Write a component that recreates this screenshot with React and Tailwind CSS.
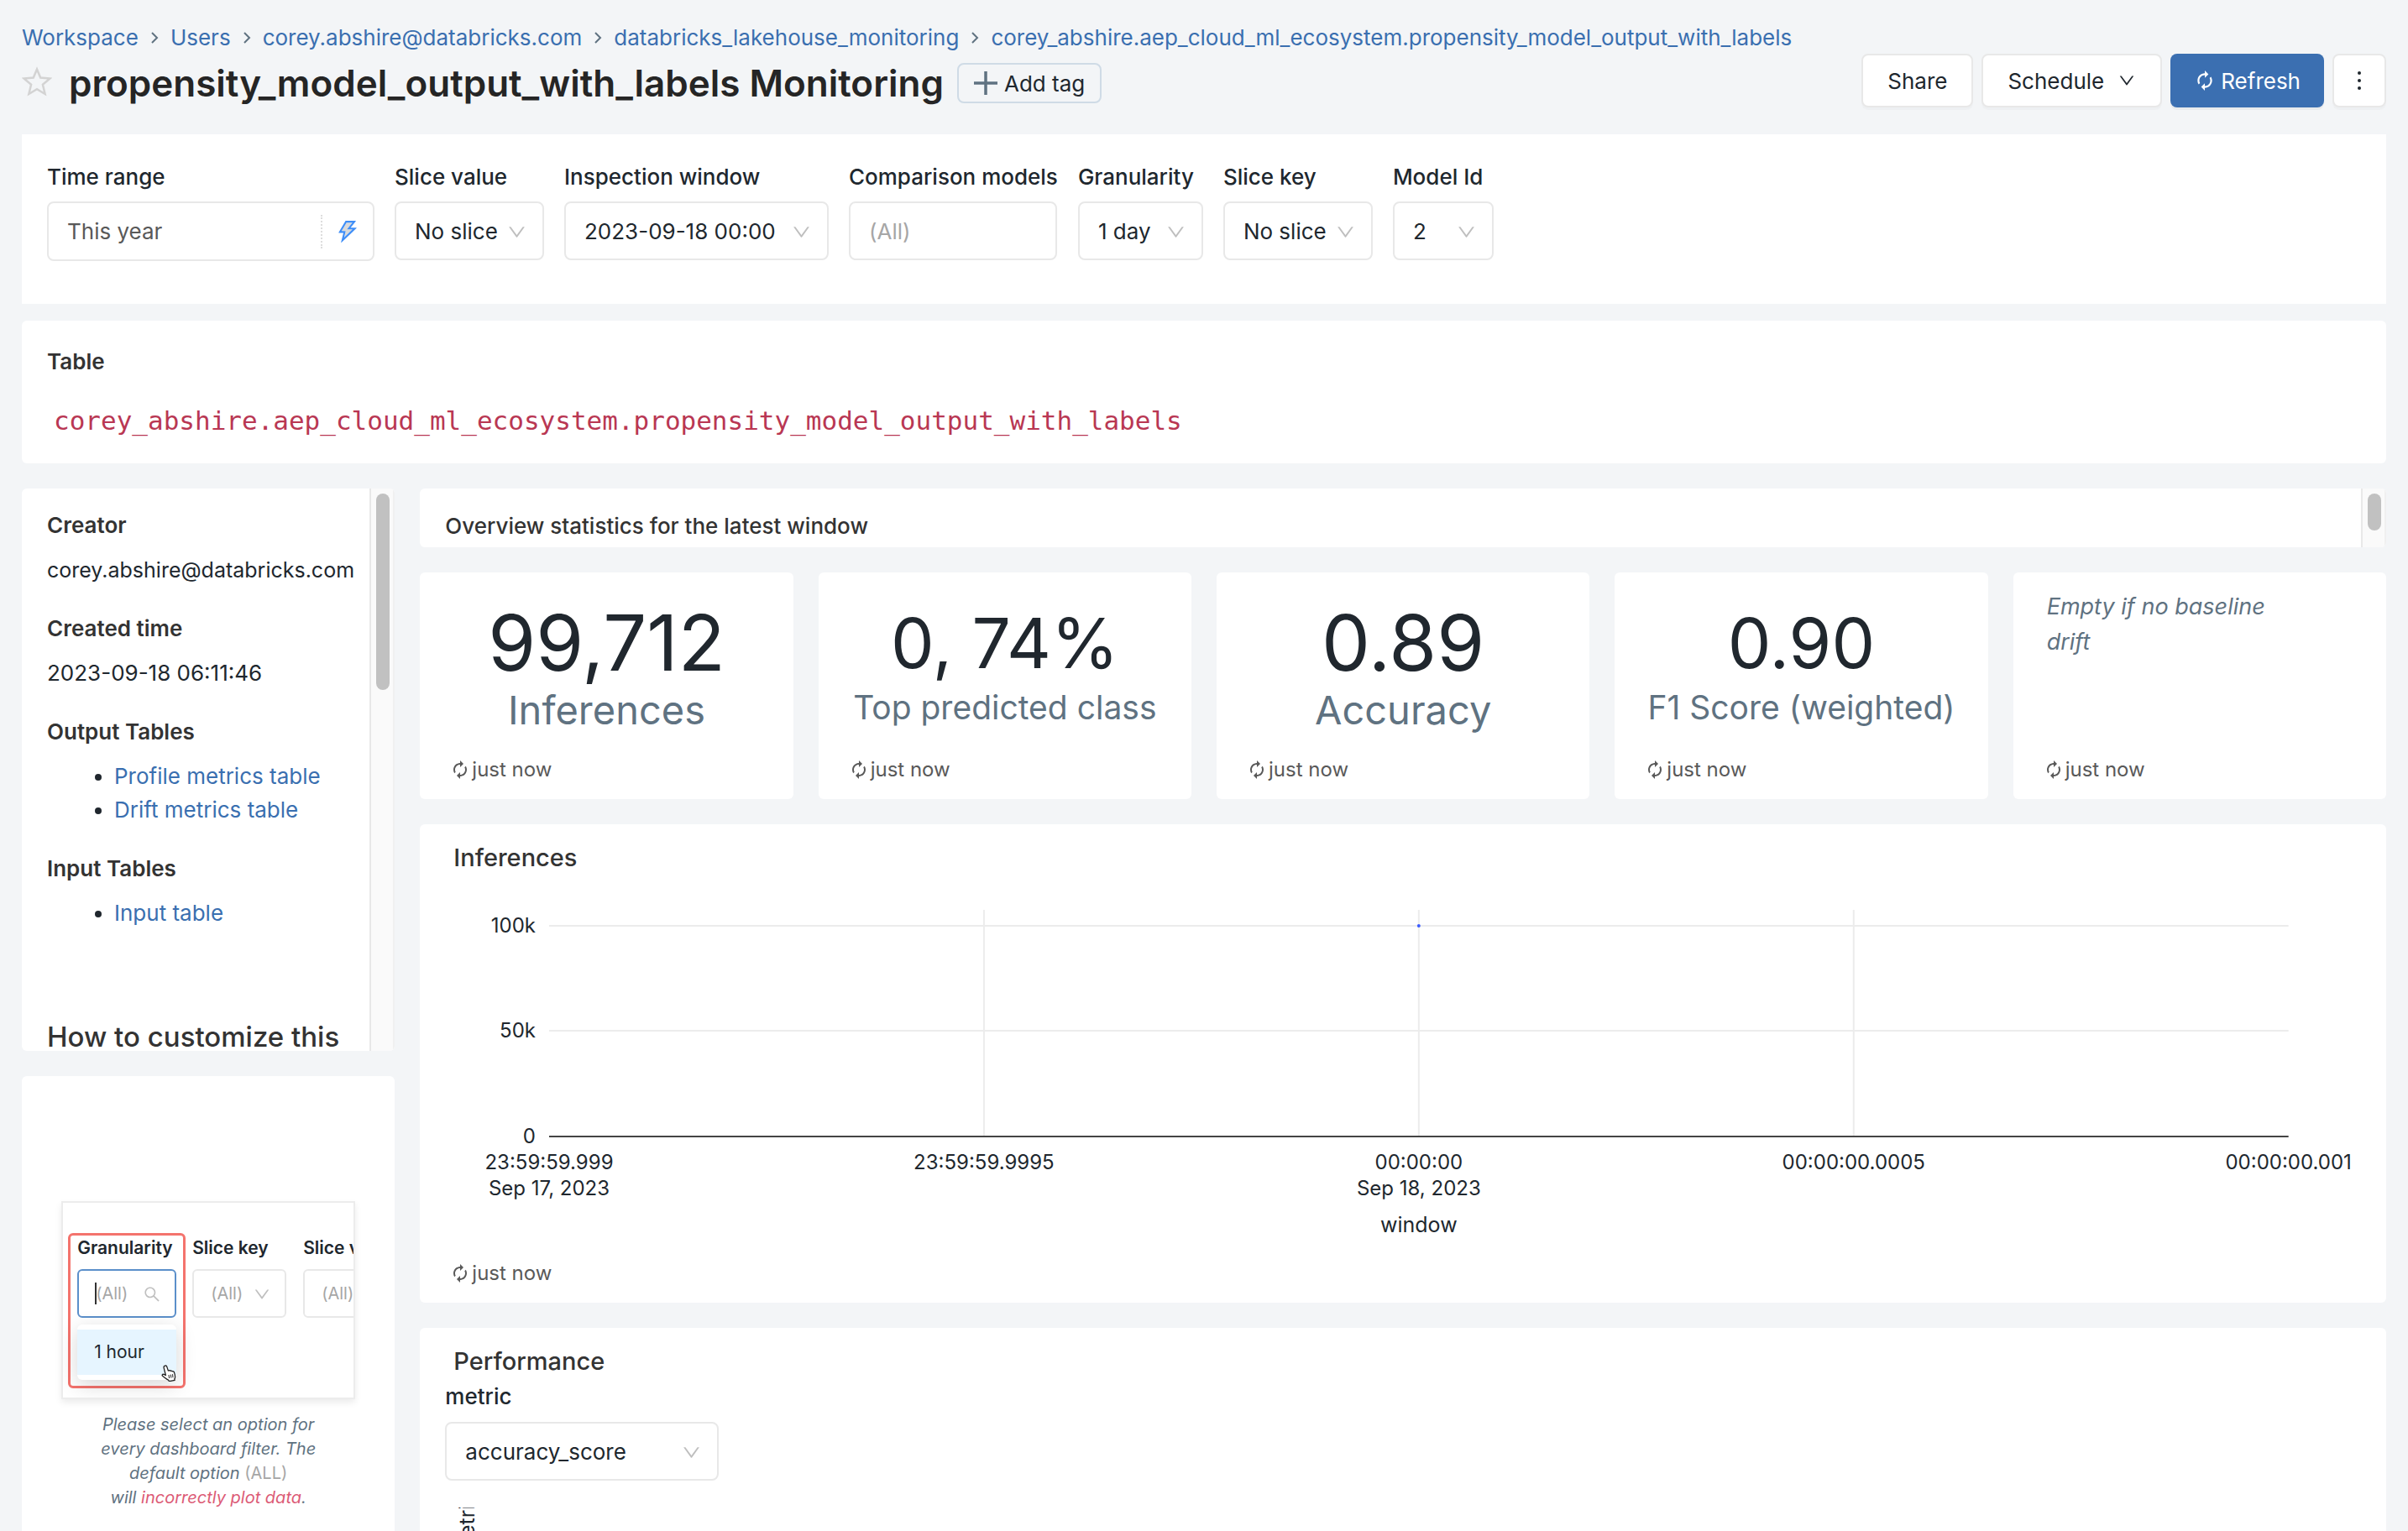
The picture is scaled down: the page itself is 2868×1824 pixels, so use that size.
import { AiOutlineDown, AiOutlineSearch, AiTwotoneThunderbolt } from "react-icons/ai";
import { MdAutorenew } from "react-icons/md";

const crumbs = [
  "Workspace",
  "Users",
  "corey.abshire@databricks.com",
  "databricks_lakehouse_monitoring",
  "corey_abshire.aep_cloud_ml_ecosystem.propensity_model_output_with_labels",
];

function CrumbArrow() {
  return (
    <svg viewBox="0 0 10 16" className="h-4 w-2.5" fill="none" stroke="#5f7281" strokeWidth="2" aria-hidden="true">
      <path d="M2 2l6 6-6 6" />
    </svg>
  );
}

function StarIcon() {
  return (
    <svg viewBox="0 0 36 36" className="size-9" fill="none" stroke="#d3d3d3" strokeWidth="2.5" aria-hidden="true">
      <path d="M18 3.5l4.2 10 11.3 1-8.600 7.200 2.700 11.300L18 27.200l-9.600 5.800 2.700-11.300L2.500 14.500l11.300-1z" />
    </svg>
  );
}

function Header() {
  const button = "flex h-16 items-center rounded-lg border-2 border-[#e8e8e8] bg-white shadow-[0_3px_0_rgba(0,0,0,0.02)]";
  return (
    <header className="flex h-40 shrink-0 items-start justify-between">
      <div className="flex flex-col gap-2.5 pt-[25px]">
        <nav aria-label="Breadcrumb" className="flex items-center gap-3.5 leading-10">
          {crumbs.map((c, i) => (
            <span key={c} className="flex items-center gap-3.5">
              {i > 0 && <CrumbArrow />}
              <a href="#" className="text-[#3a6fb0]">{c}</a>
            </span>
          ))}
        </nav>
        <div className="flex h-12 items-center">
          <button aria-label="Favorite" className="-mt-1"><StarIcon /></button>
          <h1 className="ml-5 text-[44px] leading-[48px] font-semibold text-[#252525]">
            propensity_model_output_with_labels Monitoring
          </h1>
          <button className="ml-4 flex h-12 items-center gap-2 rounded-lg border-2 border-[#cfdbe6] px-[18px]">
            <svg viewBox="0 0 28 28" className="size-7" stroke="#5f7281" strokeWidth="3.500" aria-hidden="true">
              <path d="M14 0v28M0 14h28" />
            </svg>
            Add tag
          </button>
        </div>
      </div>
      <div className="flex gap-2.5 pt-16">
        <button className={`${button} px-[29px]`}>Share</button>
        <button className={`${button} gap-4 px-[29px]`}>
          Schedule <AiOutlineDown className="size-[22px]" />
        </button>
        <button className="flex h-16 items-center gap-1.5 rounded-lg bg-[#3b6fb1] px-7 text-white shadow-[0_3px_0_rgba(0,0,0,0.04)]">
          <MdAutorenew className="size-[26px]" /> Refresh
        </button>
        <button aria-label="More actions" className={`${button} w-16 justify-center`}>
          <svg viewBox="0 0 8 26" className="h-[26px] w-2" fill="#20272e" aria-hidden="true">
            <circle cx="4" cy="4" r="2" />
            <circle cx="4" cy="13" r="2" />
            <circle cx="4" cy="22" r="2" />
          </svg>
        </button>
      </div>
    </header>
  );
}

function Select({ id, value, width }) {
  return (
    <div className={`relative ${width}`}>
      <select id={id} className="h-[70px] w-full appearance-none rounded-lg border-2 border-[#e8e8e8] bg-white pl-[22px]">
        <option>{value}</option>
      </select>
      <AiOutlineDown className="pointer-events-none absolute top-6 right-5 size-[25px] text-[#bfbfbf]" />
    </div>
  );
}

function Field({ id, label, children }) {
  return (
    <div className="flex flex-col gap-[9px]">
      <label htmlFor={id} className="leading-10 font-medium whitespace-nowrap">{label}</label>
      {children}
    </div>
  );
}

function Filters() {
  return (
    <section className="flex h-[202px] shrink-0 gap-6 bg-white px-[30px] pt-[31px]">
      <Field id="range" label="Time range">
        <div className="flex h-[71px] w-[390px] items-center rounded-lg border-2 border-[#e8e8e8]">
          <input id="range" defaultValue="This year" className="h-full min-w-0 flex-1 rounded-lg pl-[22px] text-[#595959] outline-none" />
          <button aria-label="Dynamic range" className="flex h-10 w-[62px] items-center justify-center border-l-2 border-dotted border-[#dddddd] text-[#3f8ef7]">
            <AiTwotoneThunderbolt className="size-8" />
          </button>
        </div>
      </Field>
      <Field id="sliceValue" label="Slice value"><Select id="sliceValue" value="No slice" width="w-[178px]" /></Field>
      <Field id="window" label="Inspection window"><Select id="window" value="2023-09-18 00:00" width="w-[315px]" /></Field>
      <Field id="models" label="Comparison models">
        <input id="models" placeholder="(All)" className="h-[70px] w-[248px] rounded-lg border-2 border-[#e8e8e8] px-[22px] placeholder:text-[#a6a6a6]" />
      </Field>
      <Field id="gran" label="Granularity"><Select id="gran" value="1 day" width="w-[149px]" /></Field>
      <Field id="sliceKey" label="Slice key"><Select id="sliceKey" value="No slice" width="w-[178px]" /></Field>
      <Field id="model" label="Model Id"><Select id="model" value="2" width="w-[120px]" /></Field>
    </section>
  );
}

function ScrollTrack({ thumb }) {
  return (
    <div className="w-[30px] shrink-0 border-x-2 border-l-[#e8e8e8] border-r-[#f0f0f0] bg-[#fafafa] px-1.5 pt-1.5">
      <div className={`w-4 rounded-full bg-[#c1c1c1] ${thumb}`} />
    </div>
  );
}

function Info({ title, children }) {
  return (
    <div className="flex flex-col gap-[13px]">
      <h2 className="font-semibold text-[#333333]">{title}</h2>
      {children}
    </div>
  );
}

function DetailsCard() {
  const link = "text-[#3a6fb0]";
  return (
    <section className="flex h-[670px] shrink-0 overflow-hidden rounded-md bg-white">
      <div className="flex min-w-0 flex-1 flex-col gap-[30px] overflow-hidden pt-6 pl-[30px] leading-10">
        <Info title="Creator"><p className="text-[25px]">corey.abshire@databricks.com</p></Info>
        <Info title="Created time"><p>2023-09-18 06:11:46</p></Info>
        <Info title="Output Tables">
          <ul className="list-disc pl-20">
            <li><a href="#" className={link}>Profile metrics table</a></li>
            <li><a href="#" className={link}>Drift metrics table</a></li>
          </ul>
        </Info>
        <Info title="Input Tables">
          <ul className="list-disc pl-20">
            <li><a href="#" className={link}>Input table</a></li>
          </ul>
        </Info>
        <h2 className="pt-[73px] text-[33px] leading-[48px] font-medium whitespace-nowrap text-[#333333]">How to customize this</h2>
      </div>
      <ScrollTrack thumb="h-[234px]" />
    </section>
  );
}

function HandCursor() {
  return (
    <svg viewBox="0 0 18 20" className="absolute top-12 left-[100px] h-5 w-[18px]" fill="#fff" stroke="#222" strokeWidth="1.300" strokeLinejoin="round" aria-hidden="true">
      <path d="M4.500 1.200c1-.5 1.900 0 2.200.9l1.700 5c.8-.7 1.900-.5 2.300.2.900-.6 1.900-.3 2.300.5 1-.4 2 0 2.400 1 .9 2.600 2.200 5.700.4 8.200l.3 1.400-6.600 1.300-1-1.500c-2-.8-4-2.700-6.600-4.600-1.600-1.300-.3-2.800 1.300-2.200l2.200 1.100-2.300-9.200c-.2-1 .4-1.800 1.400-2.100z" />
      <path d="M9 12l.6 4M11.300 11.600l.6 4M13.500 11.200l.5 4" fill="none" strokeWidth="1" />
    </svg>
  );
}

function HelpCard() {
  const box = "h-[58px] w-full rounded-md border-2 bg-white pl-5 text-[20px] placeholder:text-[#a6a6a6]";
  return (
    <section className="flex min-h-0 flex-1 flex-col items-center rounded-t-md bg-white pt-[149px]">
      <div className="flex h-[236px] w-[350px] shrink-0 items-start overflow-hidden border-2 border-[#ececec] pt-9 pl-1.5 text-[21px] shadow-[0_4px_8px_rgba(0,0,0,0.08)]">
        <div className="flex h-[185px] w-[140px] shrink-0 flex-col rounded-md border-[3px] border-[#f4736d] px-2">
          <label htmlFor="g2" className="leading-[30px] font-semibold">Granularity</label>
          <div className="relative mt-2.5">
            <input id="g2" placeholder="(All)" className={`${box} border-[#5b8fca]`} />
            <span className="absolute top-4 left-[21px] h-[26px] w-0.5 bg-[#333333]" />
            <AiOutlineSearch className="absolute top-[19px] right-[18px] size-[22px] text-[#bfbfbf]" />
          </div>
          <div className="relative mt-2 rounded-md bg-white py-1.5 shadow-[0_6px_24px_rgba(0,0,0,0.16)]">
            <button className="flex h-[54px] w-full items-center bg-[#e6f5ff] pl-5">1 hour</button>
            <HandCursor />
          </div>
        </div>
        <div className="ml-2 flex w-[112px] shrink-0 flex-col gap-2.5 pt-[3px]">
          <label htmlFor="k2" className="leading-[30px] font-semibold">Slice key</label>
          <div className="relative">
            <input id="k2" placeholder="(All)" className={`${box} border-[#e8e8e8]`} />
            <AiOutlineDown className="absolute top-[19px] right-[18px] size-[22px] text-[#bfbfbf]" />
          </div>
        </div>
        <div className="ml-5 flex w-[130px] shrink-0 flex-col gap-2.5 pt-[3px]">
          <label htmlFor="v2" className="leading-[30px] font-semibold">Slice value</label>
          <input id="v2" placeholder="(All)" className={`${box} border-[#e8e8e8]`} />
        </div>
      </div>
      <p className="mt-4 shrink-0 text-center text-[20px] leading-[29px] text-[#5f7281] italic">
        Please select an option for
        <br />
        every dashboard filter. The
        <br />
        default option <span className="text-[#a6a6a6] not-italic">(ALL)</span>
        <br />
        will <span className="text-[#dc5b76]">incorrectly plot data</span>.
      </p>
    </section>
  );
}

function JustNow() {
  return (
    <div className="flex items-center gap-0.5 text-[24px] leading-[30px] text-[#595959]">
      <MdAutorenew className="-ml-1 size-6" />
      just now
    </div>
  );
}

const stats = [
  { value: "99,712", label: "Inferences", big: true },
  { value: "0, 74%", label: "Top predicted class", big: false },
  { value: "0.89", label: "Accuracy", big: true },
  { value: "0.90", label: "F1 Score (weighted)", big: false },
];

function Stat({ value, label, big }) {
  return (
    <article className="flex h-[270px] flex-col justify-between rounded-md bg-white pt-[34px] pb-5">
      <div className="text-center whitespace-nowrap">
        <div className={big ? "text-[92px] leading-[100px]" : "text-[82px] leading-[102px]"}>{value}</div>
        <div className={big ? "text-[47px] leading-[60px] text-[#5f7281]" : "text-[39px] leading-[50px] text-[#5f7281]"}>{label}</div>
      </div>
      <div className="pl-10"><JustNow /></div>
    </article>
  );
}

const ticks = [
  { x: "0%", top: "23:59:59.999", bottom: "Sep 17, 2023" },
  { x: "25%", top: "23:59:59.9995" },
  { x: "50%", top: "00:00:00", bottom: "Sep 18, 2023" },
  { x: "75%", top: "00:00:00.0005" },
  { x: "100%", top: "00:00:00.001" },
];

const levels = [
  { y: 21, label: "100k" },
  { y: 146, label: "50k" },
  { y: 272, label: "0" },
];

function InferencesChart() {
  return (
    <section className="flex h-[570px] shrink-0 flex-col rounded-md bg-white pt-5 pb-5">
      <h2 className="pl-10 text-[29px] leading-10 font-medium text-[#333333]">Inferences</h2>
      <div className="mt-10 flex-1 pr-[116px] pl-[154px]">
        <svg className="h-[400px] w-full overflow-visible" fill="#20272e" fontSize="24" role="img" aria-label="Inferences by window">
          {["25%", "50%", "75%"].map((x) => (
            <line key={x} x1={x} x2={x} y1="2" y2="272" stroke="#ececec" strokeWidth="2" />
          ))}
          {levels.map(({ y, label }) => (
            <g key={label}>
              <line x1="0%" x2="100%" y1={y} y2={y} stroke={label === "0" ? "#444444" : "#ececec"} strokeWidth="2" />
              <text x="-16" y={y + 8} textAnchor="end">{label}</text>
            </g>
          ))}
          <circle cx="50%" cy="21" r="2" fill="#3b5bff" />
          {ticks.map(({ x, top, bottom }) => (
            <g key={x} textAnchor="middle">
              <text x={x} y="311">{top}</text>
              {bottom && <text x={x} y="342">{bottom}</text>}
            </g>
          ))}
          <text x="50%" y="386" textAnchor="middle" fontSize="25">window</text>
        </svg>
      </div>
      <div className="pl-10"><JustNow /></div>
    </section>
  );
}

function Performance() {
  return (
    <section className="flex min-h-0 flex-1 flex-col items-start overflow-hidden rounded-t-md bg-white pt-5 pl-[30px]">
      <h2 className="pl-2.5 text-[29px] leading-10 font-medium text-[#333333]">Performance</h2>
      <label htmlFor="metric" className="mt-0.5 leading-10 font-medium">metric</label>
      <div className="mt-2.5"><Select id="metric" value="accuracy_score" width="w-[326px]" /></div>
      <svg className="mt-8 h-24 w-full shrink-0 overflow-hidden" fill="#20272e" fontSize="25" aria-label="metric by window">
        <text transform="translate(35 57) rotate(-90)">metric</text>
      </svg>
    </section>
  );
}

export default function App() {
  return (
    <main className="flex h-screen flex-col overflow-hidden bg-[#f3f5f7] px-[26px] font-['Inter',sans-serif] text-[26px] text-[#20272e]">
      <Header />
      <Filters />
      <section className="mt-5 flex shrink-0 flex-col gap-[30px] rounded-md bg-white px-[30px] pt-[29px] pb-[31px] leading-10">
        <h2 className="font-semibold text-[#333333]">Table</h2>
        <code className="pl-2 font-['DejaVu_Sans_Mono',monospace] text-[31px] text-[#b93753]">
          corey_abshire.aep_cloud_ml_ecosystem.propensity_model_output_with_labels
        </code>
      </section>
      <div className="mt-[30px] grid min-h-0 flex-1 grid-cols-6 grid-rows-1 gap-x-[30px]">
        <div className="flex min-h-0 flex-col gap-[30px]">
          <DetailsCard />
          <HelpCard />
        </div>
        <div className="col-span-5 flex min-h-0 flex-col gap-[30px]">
          <section className="flex h-[70px] shrink-0 justify-between overflow-hidden rounded-md bg-white">
            <p className="pt-[25px] pl-[30px] leading-10 font-medium text-[#333333]">Overview statistics for the latest window</p>
            <ScrollTrack thumb="h-11" />
          </section>
          <div className="grid shrink-0 grid-cols-5 gap-[30px]">
            {stats.map((s) => <Stat key={s.label} {...s} />)}
            <article className="flex h-[270px] flex-col justify-between rounded-md bg-white px-10 pt-5 pb-5">
              <p className="max-w-[300px] text-[27px] leading-[42px] text-[#5f7281] italic">Empty if no baseline drift</p>
              <JustNow />
            </article>
          </div>
          <InferencesChart />
          <Performance />
        </div>
      </div>
    </main>
  );
}
